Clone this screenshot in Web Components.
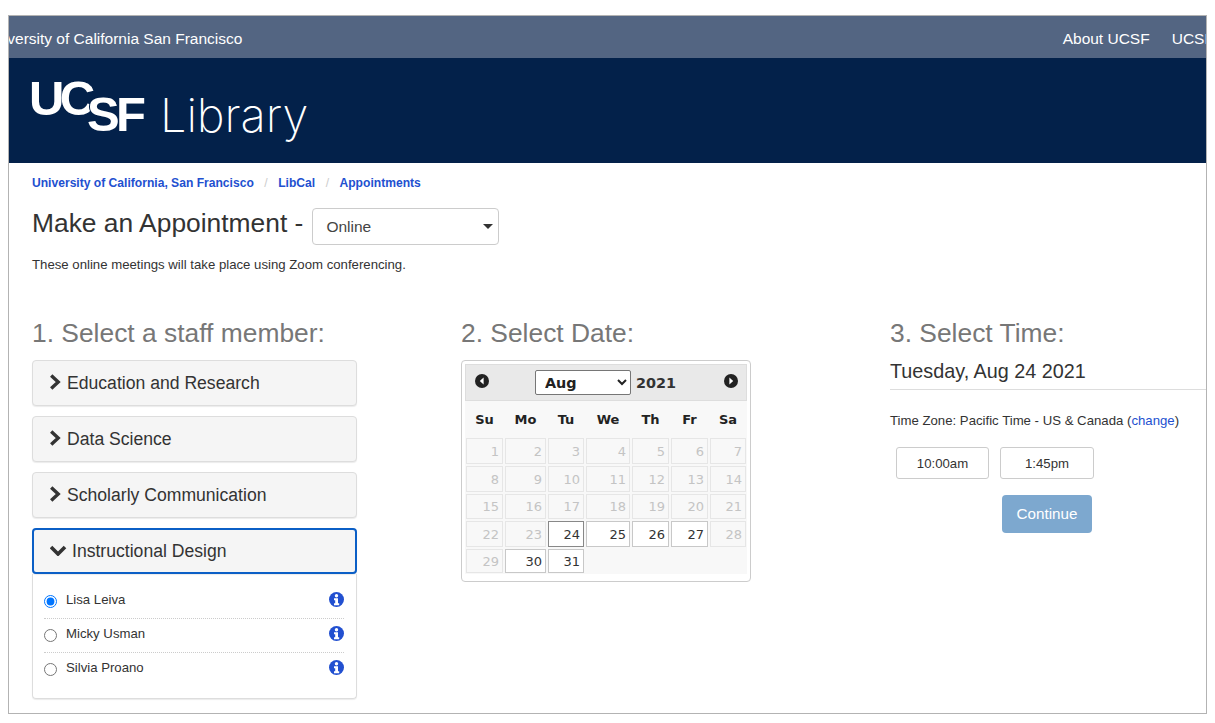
<!DOCTYPE html>
<html lang="en">
<head>
<meta charset="utf-8">
<title>Make an Appointment</title>
<style>
  html, body { margin: 0; background: #fff; }
  body { font-family: "Liberation Sans", Arial, sans-serif; color: #333; height: 723px; overflow: hidden; }
  .frame { margin: 15px 0 0 8px; width: 1199px; height: 699px; box-sizing: border-box; border: 1px solid #b3b3b3; overflow: hidden; }
  .columns { display: grid; grid-template-columns: 429px 429px 1fr; padding-left: 23px; }
</style>
</head>
<body>
<div class="frame">
  <ucsf-topbar></ucsf-topbar>
  <ucsf-masthead></ucsf-masthead>
  <lib-breadcrumb></lib-breadcrumb>
  <appt-heading></appt-heading>
  <div class="columns">
    <staff-column></staff-column>
    <date-column></date-column>
    <time-column></time-column>
  </div>
</div>

<script>
const css = (s) => `<style>${s}</style>`;

class UcsfTopbar extends HTMLElement {
  constructor() {
    super();
    this.attachShadow({mode: 'open'}).innerHTML = css(`
      :host { display: flex; justify-content: space-between; align-items: center; height: 42px; background: #536582; color: #fff; font-size: 15.5px; overflow: hidden; white-space: nowrap; padding-top: 3px; box-sizing: border-box; }
      .name { margin-left: -25px; }
      nav { display: flex; gap: 22px; margin-right: -57px; }
    `) + `
      <span class="name">University of California San Francisco</span>
      <nav><span>About UCSF</span><span>UCSF Health</span></nav>`;
  }
}

class UcsfMasthead extends HTMLElement {
  constructor() {
    super();
    this.attachShadow({mode: 'open'}).innerHTML = css(`
      :host { display: flex; align-items: flex-start; height: 105px; background: #03214a; color: #fff; padding-left: 23px; box-sizing: border-box; }
      .logo { display: block; width: 114px; height: 54px; margin-top: 20px; position: relative; font-weight: bold; font-size: 49px; line-height: 40px; }
      .uc, .sf { position: absolute; }
      .uc { left: -3px; top: 0; letter-spacing: -4.6px; }
      .sf { left: 55px; top: 16px; letter-spacing: -3.8px; text-shadow: -1px 0 #03214a, 0 -1px #03214a; }
      .lib { font-family: Inter, sans-serif; font-weight: 200; font-size: 47px; letter-spacing: -0.1px; line-height: 60px; margin: 27px 0 0 14px; }
    `) + `
      <div class="logo"><span class="uc">UC</span><span class="sf">SF</span></div>
      <div class="lib">Library</div>`;
  }
}

class LibBreadcrumb extends HTMLElement {
  constructor() {
    super();
    this.attachShadow({mode: 'open'}).innerHTML = css(`
      :host { display: flex; align-items: center; height: 40px; padding: 0 0 0 23px; font-size: 12.1px; font-weight: bold; color: #2250d0; box-sizing: border-box; }
      i { font-style: normal; font-weight: normal; color: #ccc; margin: 0 10.5px; }
    `) + `<span>University of California, San Francisco</span><i>/</i><span>LibCal</span><i>/</i><span>Appointments</span>`;
  }
}

class ApptHeading extends HTMLElement {
  constructor() {
    super();
    this.attachShadow({mode: 'open'}).innerHTML = css(`
      :host { display: block; padding: 5px 0 0 23px; height: 115px; box-sizing: border-box; }
      .row { display: flex; align-items: center; gap: 9px; }
      h1 { margin: 0 0 6px; font-size: 26.4px; font-weight: normal; color: #333; line-height: 31px; }
      .select { width: 187px; height: 37px; box-sizing: border-box; border: 1px solid #ccc; border-radius: 4px; font-size: 15.5px; display: flex; align-items: center; justify-content: space-between; padding: 0 5px 0 13px; color: #444; }
      .caret { border: 5px solid transparent; border-top-color: #333; border-bottom: 0; width: 0; height: 0; }
      p { margin: 12px 0 0; font-size: 13.2px; color: #333; }
    `) + `
      <div class="row"><h1>Make an Appointment -</h1><div class="select"><span>Online</span><span class="caret"></span></div></div>
      <p>These online meetings will take place using Zoom conferencing.</p>`;
  }
}

class StepTitle extends HTMLElement {
  constructor() {
    super();
    this.attachShadow({mode: 'open'}).innerHTML = css(`
      :host { display: block; font-size: 26.4px; line-height: 30px; color: #777; }
    `) + `<slot></slot>`;
  }
}

const chevron = (open) => open
  ? `<svg width="18" height="12" viewBox="0 0 18 12"><path d="M1 3l7 7 7-7" fill="none" stroke="#333" stroke-width="3.6"/></svg>`
  : `<svg width="12" height="16" viewBox="0 0 12 16"><path d="M1.2 1.5l7 6.5-7 6.5" fill="none" stroke="#333" stroke-width="3.4"/></svg>`;

class AccordionHead extends HTMLElement {
  constructor() {
    super();
    const open = this.hasAttribute('open');
    this.attachShadow({mode: 'open'}).innerHTML = css(`
      :host { display: flex; align-items: center; gap: 5px; box-sizing: border-box; height: 46px; padding-left: 17px; background: #f5f5f5; border: 1px solid #ddd; border-radius: 4px; box-shadow: 0 1px 1px rgba(0,0,0,.08); font-size: 17.6px; color: #333; margin-bottom: 10px; }
      :host([open]) { border: 2px solid #0b5fc6; margin-bottom: 0; padding-left: 16px; gap: 4px; }
      svg { display: block; margin-top: -2px; }
    `) + chevron(open) + `<slot></slot>`;
  }
}

class StaffRadio extends HTMLElement {
  constructor() {
    super();
    const checked = this.hasAttribute('checked') ? 'checked' : '';
    this.attachShadow({mode: 'open'}).innerHTML = css(`
      :host { display: flex; align-items: center; height: 34px; font-size: 13.2px; color: #333; border-bottom: 1px dotted #ccc; box-sizing: border-box; }
      :host(:last-child) { border-bottom: 0; }
      input { margin: -1px 9px 0 0; width: 13px; height: 13px; }
      span { flex: 1; margin-top: -5px; }
      svg { display: block; margin-top: -5px; }
    `) + `
      <input type="radio" name="staff" ${checked}>
      <span><slot></slot></span>
      <svg width="15" height="15" viewBox="0 0 15 15"><circle cx="7.5" cy="7.5" r="7.5" fill="#2250d0"/><circle cx="7.5" cy="3.7" r="1.7" fill="#fff"/><path d="M5 6.2h4v5h1.2v2H5v-2h1.2V8.2H5z" fill="#fff"/></svg>`;
  }
}

class StaffColumn extends HTMLElement {
  constructor() {
    super();
    this.attachShadow({mode: 'open'}).innerHTML = css(`
      :host { display: block; width: 325px; }
      step-title { margin-bottom: 12px; }
      .panel { border: 1px solid #ddd; border-top: 0; border-radius: 0 0 4px 4px; box-shadow: 0 1px 1px rgba(0,0,0,.08); padding: 11px 12px 12px 11px; height: 125px; box-sizing: border-box; }
    `) + `
      <step-title>1. Select a staff member:</step-title>
      <accordion-head>Education and Research</accordion-head>
      <accordion-head>Data Science</accordion-head>
      <accordion-head>Scholarly Communication</accordion-head>
      <accordion-head open>Instructional Design</accordion-head>
      <div class="panel">
        <staff-radio checked>Lisa Leiva</staff-radio>
        <staff-radio>Micky Usman</staff-radio>
        <staff-radio>Silvia Proano</staff-radio>
      </div>`;
  }
}

class DatePicker extends HTMLElement {
  constructor() {
    super();
    let cells = '';
    for (let d = 1; d <= 31; d++) {
      const on = d >= 24 && d !== 28 && d !== 29;
      cells += `<span class="day ${on ? 'on' : ''} ${d === 24 ? 'sel' : ''}">${d}</span>`;
    }
    const nav = (dir) => `<svg width="14" height="14" viewBox="0 0 14 14"><circle cx="7" cy="7" r="7" fill="#222"/><path d="${dir === 'l' ? 'M8.6 3.5L4.8 7l3.8 3.5z' : 'M5.4 3.5L9.2 7l-3.8 3.5z'}" fill="#fff"/></svg>`;
    this.attachShadow({mode: 'open'}).innerHTML = css(`
      :host { display: block; width: 290px; height: 222px; box-sizing: border-box; border: 1px solid #ccc; border-radius: 4px; padding: 3px; font-family: "DejaVu Sans", Verdana, sans-serif; font-size: 13px; }
      .head { display: flex; align-items: center; height: 37px; box-sizing: border-box; border: 1px solid #ddd; background: #e9e9e9; font-weight: bold; color: #333; padding: 0 8px 0 9px; }
      .head svg { margin-top: -3px; }
      .title { flex: 1; display: flex; align-items: center; justify-content: center; gap: 5px; padding-right: 2px; font-size: 14.4px; }
      select { width: 96px; height: 25px; font: bold 14.4px "DejaVu Sans", sans-serif; color: #222; background: #fff; border: 1px solid #767676; border-radius: 2px; padding-left: 5px; }
      .body { background: #f8f8f8; height: 173px; padding: 0 0 0 1px; box-sizing: border-box; }
      .grid { display: grid; grid-template-columns: 37px 41px 36px 44px 37px 37px 36px; column-gap: 2px; }
      .days { grid-template-rows: 26px 26px 25px 26px 24px; row-gap: 2px; }
      .wk { height: 37px; display: flex; align-items: center; justify-content: center; font-weight: bold; color: #222; }
      .day { box-sizing: border-box; border: 1px solid #e6e6e6; text-align: right; padding: 4px 3px 0 0; line-height: 17px; color: #c4c4c4; }
      .day:nth-child(n+15):nth-child(-n+21), .day:nth-child(n+29) { padding-top: 3px; }
      .day.on { background: #fff; border-color: #c8c8c8; color: #333; }
      .day.sel { border-color: #888; }
    `) + `
      <div class="head">${nav('l')}
        <div class="title"><select><option>Aug</option></select><span>2021</span></div>
        ${nav('r')}</div>
      <div class="body">
        <div class="grid">${['Su','Mo','Tu','We','Th','Fr','Sa'].map(w => `<span class="wk">${w}</span>`).join('')}</div>
        <div class="grid days">${cells}</div>
      </div>`;
  }
}

class DateColumn extends HTMLElement {
  constructor() {
    super();
    this.attachShadow({mode: 'open'}).innerHTML = css(`
      :host { display: block; }
      step-title { margin-bottom: 12px; }
    `) + `<step-title>2. Select Date:</step-title><date-picker></date-picker>`;
  }
}

class TimeColumn extends HTMLElement {
  constructor() {
    super();
    this.attachShadow({mode: 'open'}).innerHTML = css(`
      :host { display: block; color: #333; }
      h2 { margin: 10px 0 0; font-size: 19.8px; font-weight: normal; line-height: 27px; padding-bottom: 4px; border-bottom: 1px solid #ddd; }
      p { margin: 22px 0 0; font-size: 13.2px; line-height: 18px; }
      a { color: #2250d0; text-decoration: none; }
      .times { display: flex; gap: 11px; margin: 17px 0 0 6px; }
      .time { box-sizing: border-box; height: 32px; border: 1px solid #ccc; border-radius: 3px; font-size: 13.2px; display: flex; align-items: center; justify-content: center; }
      .continue { display: flex; align-items: center; justify-content: center; width: 90px; height: 38px; box-sizing: border-box; padding-bottom: 2px; margin: 16px 0 0 112px; background: #7da8cf; color: #fff; border-radius: 4px; font-size: 15.2px; }
    `) + `
      <step-title>3. Select Time:</step-title>
      <h2>Tuesday, Aug 24 2021</h2>
      <p>Time Zone: Pacific Time - US &amp; Canada (<a>change</a>)</p>
      <div class="times"><span class="time" style="width:93px">10:00am</span><span class="time" style="width:94px">1:45pm</span></div>
      <div class="continue">Continue</div>`;
  }
}

customElements.define('ucsf-topbar', UcsfTopbar);
customElements.define('ucsf-masthead', UcsfMasthead);
customElements.define('lib-breadcrumb', LibBreadcrumb);
customElements.define('appt-heading', ApptHeading);
customElements.define('step-title', StepTitle);
customElements.define('accordion-head', AccordionHead);
customElements.define('staff-radio', StaffRadio);
customElements.define('staff-column', StaffColumn);
customElements.define('date-picker', DatePicker);
customElements.define('date-column', DateColumn);
customElements.define('time-column', TimeColumn);
</script>
</body>
</html>
